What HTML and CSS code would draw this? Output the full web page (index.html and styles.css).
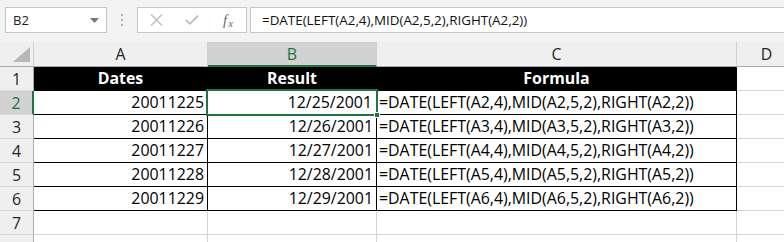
FILE: index.html
```html
<!DOCTYPE html>
<html lang="en">
<head>
  <meta charset="UTF-8">
  <title>Excel DATE formula</title>
  <link rel="stylesheet" href="styles.css">
</head>
<body>
  <!-- 公式栏 -->
  <div class="toolbar">
    <div class="namebox">
      <span>B2</span>
      <svg class="drop" width="9" height="5" viewBox="0 0 9 5"><path d="M0 0h9L4.5 5z" fill="#777"/></svg>
    </div>
    <div class="grip"><i></i><i></i><i></i></div>
    <div class="fx-buttons">
      <span class="btn">
        <svg width="13" height="12" viewBox="0 0 13 12"><path d="M1 0.5l11 11M12 0.5l-11 11" stroke="#bdbdbd" stroke-width="1.4" fill="none"/></svg>
      </span>
      <span class="btn">
        <svg width="14" height="10" viewBox="0 0 14 10"><path d="M0.8 4.8l4 4L13.2 0.6" stroke="#bdbdbd" stroke-width="1.8" fill="none"/></svg>
      </span>
      <span class="btn fx"><i>f</i><i class="x">x</i></span>
    </div>
    <div class="formula">=DATE(LEFT(A2,4),MID(A2,5,2),RIGHT(A2,2))</div>
  </div>

  <!-- 工作表 -->
  <div class="sheet">
    <div class="hd corner">
      <svg width="17" height="15" viewBox="0 0 17 15"><path d="M17 0V15H0z" fill="#b7b7b7"/></svg>
    </div>
    <div class="hd col">A</div>
    <div class="hd col sel">B</div>
    <div class="hd col">C</div>
    <div class="hd col">D</div>

    <div class="hd row">1</div>
    <div class="cell title">Dates</div>
    <div class="cell title">Result</div>
    <div class="cell title">Formula</div>
    <div class="cell"></div>

    <div class="hd row sel">2</div>
    <div class="cell data num">20011225</div>
    <div class="cell data num active">12/25/2001<span class="focus"><span class="handle"></span></span></div>
    <div class="cell data text">=DATE(LEFT(A2,4),MID(A2,5,2),RIGHT(A2,2))</div>
    <div class="cell"></div>

    <div class="hd row">3</div>
    <div class="cell data num">20011226</div>
    <div class="cell data num">12/26/2001</div>
    <div class="cell data text">=DATE(LEFT(A3,4),MID(A3,5,2),RIGHT(A3,2))</div>
    <div class="cell"></div>

    <div class="hd row">4</div>
    <div class="cell data num">20011227</div>
    <div class="cell data num">12/27/2001</div>
    <div class="cell data text">=DATE(LEFT(A4,4),MID(A4,5,2),RIGHT(A4,2))</div>
    <div class="cell"></div>

    <div class="hd row">5</div>
    <div class="cell data num">20011228</div>
    <div class="cell data num">12/28/2001</div>
    <div class="cell data text">=DATE(LEFT(A5,4),MID(A5,5,2),RIGHT(A5,2))</div>
    <div class="cell"></div>

    <div class="hd row">6</div>
    <div class="cell data num">20011229</div>
    <div class="cell data num">12/29/2001</div>
    <div class="cell data text">=DATE(LEFT(A6,4),MID(A6,5,2),RIGHT(A6,2))</div>
    <div class="cell"></div>

    <div class="hd row">7</div>
    <div class="cell"></div>
    <div class="cell"></div>
    <div class="cell"></div>
    <div class="cell"></div>

    <!-- 第 8 行只露出一条边 -->
    <div class="hd row"></div>
    <div class="cell"></div>
    <div class="cell"></div>
    <div class="cell"></div>
    <div class="cell"></div>
  </div>
</body>
</html>
```

FILE: styles.css
```css
* { margin: 0; padding: 0; box-sizing: border-box; }
html, body {
  width: 784px;
  height: 242px;
  overflow: hidden;
}
body {
  background: #fff;
  font-family: 'Open Sans', 'Liberation Sans', sans-serif;
  color: #000;
}

/* 公式栏 */
.toolbar {
  height: 42px;
  background: #f3f3f3;
  display: flex;
  align-items: flex-start;
  padding: 7px 0 0 5px;
}
.namebox {
  width: 102px;
  height: 26px;
  background: #fff;
  border: 1px solid #c6c6c6;
  display: flex;
  align-items: center;
  justify-content: space-between;
  padding: 0 7px 0 7px;
  font-size: 13px;
  color: #222;
}
.namebox .drop { margin-top: 1px; }
.grip {
  width: 30px;
  height: 26px;
  display: flex;
  flex-direction: column;
  align-items: center;
  justify-content: center;
  gap: 3px;
}
.grip i {
  width: 2px;
  height: 2px;
  background: #b0b0b0;
}
.fx-buttons {
  width: 110px;
  height: 26px;
  background: #fff;
  border: 1px solid #c6c6c6;
  display: flex;
  margin-right: 3px;
}
.btn {
  flex: 1;
  display: flex;
  align-items: center;
  justify-content: center;
}
.fx {
  font-family: 'Liberation Serif', serif;
  font-size: 15px;
  color: #6a6a6a;
  padding-top: 1px;
}
.fx .x { font-size: 11px; margin-top: 4px; margin-left: 1px; }
.formula {
  flex: 1;
  height: 26px;
  background: #fff;
  border: 1px solid #c6c6c6;
  border-right: 0;
  font-size: 13.4px;
  line-height: 24px;
  padding-left: 11px;
  color: #111;
  white-space: nowrap;
}

/* 工作表网格 */
.sheet {
  display: grid;
  grid-template-columns: 34px 174px 169px 360px 60px;
  grid-template-rows: 25px repeat(7, 24px) 12px;
  font-size: 15.9px;
}
.hd {
  background: #efefef;
  border-right: 1px solid #ababab;
  border-bottom: 1px solid #ababab;
  display: flex;
  align-items: center;
  justify-content: center;
  color: #262626;
}
.hd.col { border-right-color: #d0d0d0; }
.hd.corner {
  align-items: flex-end;
  justify-content: flex-end;
  padding: 0 3px 4px 0;
  border-right-color: #d0d0d0;
}
.hd.row { border-bottom-color: #d9d9d9; border-right-color: #ababab; }
.hd.sel {
  background: #d2d2d2;
  color: #217346;
}
.hd.col.sel { border-bottom: 2px solid #217346; }
.hd.row.sel { border-right: 2px solid #217346; }

.cell {
  border-right: 1px solid #d4d4d4;
  border-bottom: 1px solid #d4d4d4;
  line-height: 23px;
  white-space: nowrap;
}
.title {
  background: #000;
  color: #fff;
  font-weight: bold;
  text-align: center;
  border-color: #000;
}
.data { border-color: #000; }
.num { text-align: right; padding-right: 3px; }
.text { padding-left: 2px; }

/* 选中单元格 */
.active { position: relative; padding-right: 4px; }
.focus {
  position: absolute;
  top: -2px;
  left: -2px;
  right: -2px;
  bottom: -2px;
  border: 2px solid #217346;
}
.handle {
  position: absolute;
  right: -4px;
  bottom: -4px;
  width: 6px;
  height: 6px;
  background: #217346;
  border: 1px solid #fff;
}
```
